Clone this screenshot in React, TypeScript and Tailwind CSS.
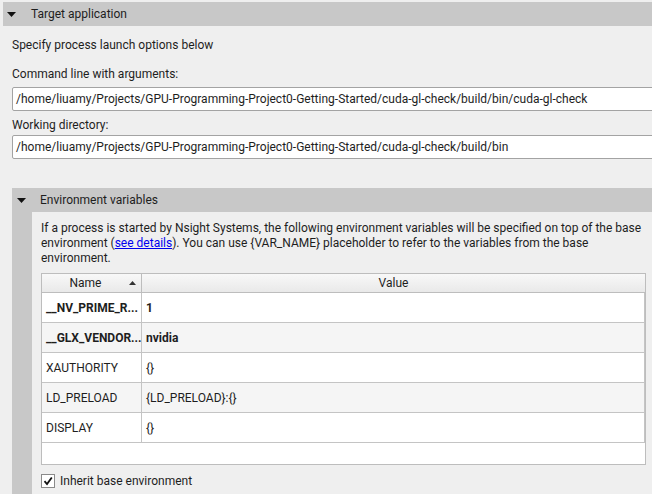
import React from 'react'

function Caret() {
  return (
    <svg width="9" height="5" viewBox="0 0 9 5" className="shrink-0">
      <path d="M0 0 L9 0 L4.5 5 Z" fill="#111" />
    </svg>
  )
}

type Row = { name: string; value: string; bold?: boolean }

const rows: Row[] = [
  { name: '__NV_PRIME_R...', value: '1', bold: true },
  { name: '__GLX_VENDOR...', value: 'nvidia', bold: true },
  { name: 'XAUTHORITY', value: '{}' },
  { name: 'LD_PRELOAD', value: '{LD_PRELOAD}:{}' },
  { name: 'DISPLAY', value: '{}' },
]

export default function App() {
  return (
    <div className="h-[494px] w-[652px] overflow-hidden bg-[#efefef] font-['Roboto',sans-serif] text-[12px] text-[#1e1e1e]">
      {/* Target application */}
      <div className="ml-[3px] mt-[2px] flex h-[24px] items-center bg-[#c8c8c8] pl-[4px]">
        <Caret />
        <span className="ml-[15px]">Target application</span>
      </div>

      <div className="pl-[12px]">
        <div className="mt-[12px] h-[15px] leading-[15px]">Specify process launch options below</div>
        <div className="mt-[14px] h-[15px] leading-[15px]">Command line with arguments:</div>
        <div className="mt-[5px] flex h-[24px] w-[660px] items-center rounded-[2px] border border-[#a3a3a3] bg-white pl-[3px]">
          /home/liuamy/Projects/GPU-Programming-Project0-Getting-Started/cuda-gl-check/build/bin/cuda-gl-check
        </div>
        <div className="mt-[7px] h-[15px] leading-[15px]">Working directory:</div>
        <div className="mt-[2px] flex h-[24px] w-[660px] items-center rounded-[2px] border border-[#a3a3a3] bg-white pl-[3px]">
          /home/liuamy/Projects/GPU-Programming-Project0-Getting-Started/cuda-gl-check/build/bin
        </div>

        {/* Environment variables */}
        <div className="mt-[29px] bg-[#c8c8c8]">
          <div className="flex h-[24px] items-center pl-[5px]">
            <Caret />
            <span className="ml-[14px]">Environment variables</span>
          </div>
          <div className="ml-[20px] bg-[#efefef] pb-[10px] pl-[9px] pr-[6px]">
            {/* wrapped the same way the dialog does */}
            <div className="pt-[9px] leading-[15px] whitespace-nowrap">
              <div>If a process is started by Nsight Systems, the following environment variables will be specified on top of the base</div>
              <div>
                <span>environment (</span>
                <a className="text-[#0000ee] underline">see details</a>
                <span>). You can use {'{VAR_NAME}'} placeholder to refer to the variables from the base</span>
              </div>
              <div>environment.</div>
            </div>

            <div className="mt-[7px] border border-[#bdbdbd] bg-white">
              <div className="flex h-[19px] border-b border-[#bdbdbd] bg-gradient-to-b from-[#f8f8f8] to-[#e9e9e9]">
                <div className="relative flex w-[100px] items-center justify-center border-r border-[#bdbdbd] pr-[12px]">
                  <span>Name</span>
                  <svg width="7" height="4" viewBox="0 0 7 4" className="absolute right-[5px] top-[7px]">
                    <path d="M0 4 L7 4 L3.5 0 Z" fill="#333" />
                  </svg>
                </div>
                <div className="flex flex-1 items-center justify-center">Value</div>
              </div>
              <div className="h-[171px]">
                {rows.map((r, i) => (
                  <div
                    key={r.name}
                    className={[
                      'flex h-[30px] border-b border-r border-[#c4c4c4]',
                      i % 2 === 1 ? 'bg-[#f5f5f5]' : 'bg-white',
                      r.bold ? 'font-bold' : '',
                    ].join(' ')}
                  >
                    <div className="flex w-[100px] items-center border-r border-[#c4c4c4] pl-[4px]">{r.name}</div>
                    <div className="flex flex-1 items-center pl-[4px]">{r.value}</div>
                  </div>
                ))}
              </div>
            </div>

            <label className="mt-[7px] flex items-center">
              <span className="flex h-[14px] w-[14px] items-center justify-center border border-[#8a8a8a] bg-white">
                <svg width="10" height="10" viewBox="0 0 10 10">
                  <path d="M1.5 5.2 L4 8 L8.8 1.5" fill="none" stroke="#111" strokeWidth="1.8" />
                </svg>
              </span>
              <span className="ml-[5px]">Inherit base environment</span>
            </label>
          </div>
        </div>
      </div>
    </div>
  )
}
